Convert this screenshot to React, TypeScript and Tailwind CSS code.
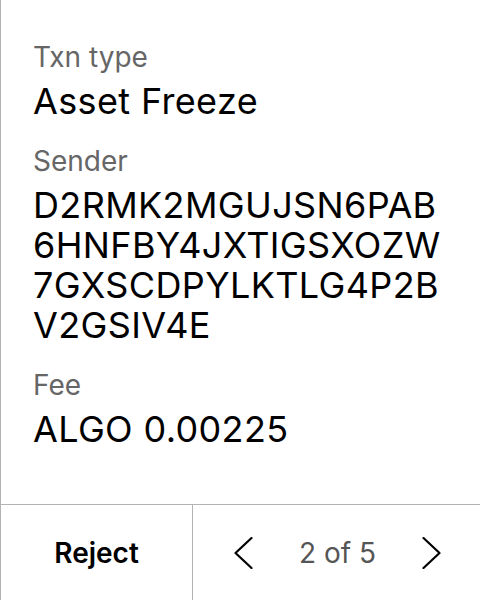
import React from "react";

function Chevron({ dir }: { dir: "left" | "right" }) {
  return (
    <svg width="19" height="32" viewBox="0 0 19 32" fill="none" className="block">
      {dir === "left" ? (
        <polyline points="17.5,1 1.5,16 17.5,31" stroke="#000" strokeWidth="2.2" strokeLinecap="round" strokeLinejoin="round" />
      ) : (
        <polyline points="1.5,1 17.5,16 1.5,31" stroke="#000" strokeWidth="2.2" strokeLinecap="round" strokeLinejoin="round" />
      )}
    </svg>
  );
}

function Field({ label, children }: { label: string; children: React.ReactNode }) {
  return (
    <div className="flex flex-col gap-[8px]">
      <div className="text-[28px] leading-[32px] text-[#666666]">{label}</div>
      <div className="text-[36px] leading-[40px] tracking-[0.01em] text-black">{children}</div>
    </div>
  );
}

export default function App() {
  return (
    <div
      className="h-[600px] w-[480px] flex flex-col bg-white border-l border-[#b3b3b3]"
      style={{ fontFamily: "Inter, 'Noto Sans', sans-serif" }}
    >
      <div className="flex-1 flex flex-col gap-[24px] px-8 pt-[41px]">
        <Field label="Txn type">Asset Freeze</Field>
        <Field label="Sender">
          <span className="block whitespace-nowrap">D2RMK2MGUJSN6PAB</span>
          <span className="block whitespace-nowrap">6HNFBY4JXTIGSXOZW</span>
          <span className="block whitespace-nowrap">7GXSCDPYLKTLG4P2B</span>
          <span className="block whitespace-nowrap">V2GSIV4E</span>
        </Field>
        <Field label="Fee">ALGO 0.00225</Field>
      </div>
      <div className="h-[96px] flex border-t border-[#b3b3b3]">
        <div className="w-[192px] border-r border-[#b3b3b3] flex items-center justify-center text-[28px] font-semibold text-black">
          Reject
        </div>
        <div className="flex-1 flex items-center justify-between pl-[41px] pr-[39px]">
          <Chevron dir="left" />
          <span className="text-[28px] text-[#555555]">2 of 5</span>
          <Chevron dir="right" />
        </div>
      </div>
    </div>
  );
}
